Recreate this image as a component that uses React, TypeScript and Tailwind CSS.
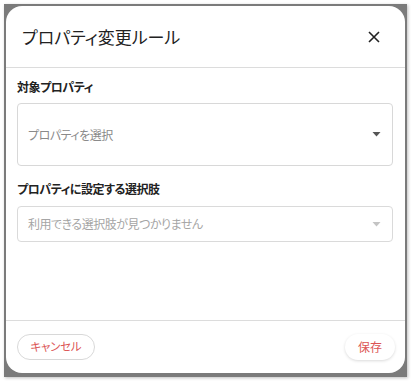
import React from 'react';

const font = "font-['Noto_Sans_CJK_JP','Noto_Sans',sans-serif] [font-feature-settings:'palt']";

const Caret = ({ color }: { color: string }) => (
  <svg width="9" height="5" viewBox="0 0 9 5" className="shrink-0">
    <path d="M0.5 0h8L4.5 4.5z" fill={color} />
  </svg>
);

export default function App() {
  return (
    <div className={`h-[382px] w-[411px] bg-white p-[4px] pb-[5px] ${font}`}>
      <div className="h-full w-full bg-[#7b7b7b] pb-[4px] pl-[2px] pr-[2px] pt-[2px] shadow-[1px_1px_3px_rgba(0,0,0,0.25)]">
        <div className="flex h-full flex-col overflow-hidden rounded-[16px] bg-white">
          {/* Header */}
          <div className="flex h-[62px] shrink-0 items-center justify-between border-b border-[#dcdcdc] pl-[16px] pr-[25px]">
            <h1 className="text-[17px] leading-none text-[#222]">プロパティ変更ルール</h1>
            <svg width="12" height="12" viewBox="0 0 12 12">
              <path d="M1 1l10 10M11 1L1 11" stroke="#222" strokeWidth="1.6" />
            </svg>
          </div>

          {/* Body */}
          <div className="flex flex-1 flex-col pl-[11px] pr-[12px] pt-[12px]">
            <label className="text-[12px] font-bold leading-[14px] tracking-[-0.04em] text-[#222]">対象プロパティ</label>
            <div className="mt-[9px] flex h-[63px] items-center justify-between rounded-[4px] border border-[#d8d8d8] pl-[10px] pr-[11px]">
              <span className="text-[12px] tracking-[-0.04em] text-[#8a8a8a]">プロパティを選択</span>
              <Caret color="#555" />
            </div>

            <label className="mt-[16px] text-[12px] font-bold leading-[14px] tracking-[-0.04em] text-[#222]">プロパティに設定する選択肢</label>
            <div className="mt-[10px] flex h-[36px] items-center justify-between rounded-[4px] border border-[#dadada] pl-[10px] pr-[11px]">
              <span className="text-[12px] tracking-[-0.04em] text-[#a5a5a5]">利用できる選択肢が見つかりません</span>
              <Caret color="#c4c4c4" />
            </div>
          </div>

          {/* Footer */}
          <div className="flex h-[53px] shrink-0 items-center justify-between border-t border-[#dcdcdc] pl-[11px] pr-[10px]">
            <button className="h-[26px] w-[78px] rounded-full border border-[#d8d8d8] text-[11.5px] tracking-[-0.02em] text-[#dc5656]">
              キャンセル
            </button>
            <button className="h-[26px] w-[50px] rounded-full text-[12px] text-[#dc5656] shadow-[0_1px_3px_rgba(0,0,0,0.15)]">
              保存
            </button>
          </div>
        </div>
      </div>
    </div>
  );
}
